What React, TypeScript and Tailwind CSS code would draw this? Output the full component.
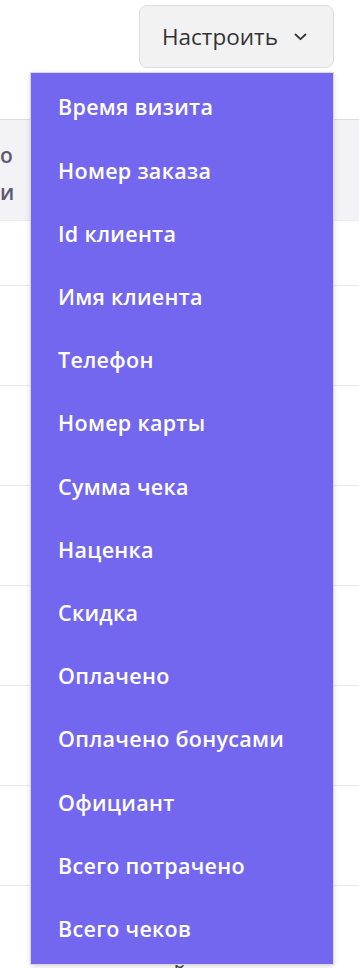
import React from "react";

const items = [
  "Время визита",
  "Номер заказа",
  "Id клиента",
  "Имя клиента",
  "Телефон",
  "Номер карты",
  "Сумма чека",
  "Наценка",
  "Скидка",
  "Оплачено",
  "Оплачено бонусами",
  "Официант",
  "Всего потрачено",
  "Всего чеков",
];

export default function App() {
  const font = { fontFamily: '"Open Sans", "Noto Sans", sans-serif' };
  return (
    <div className="relative w-[359px] h-[968px] overflow-hidden bg-white" style={font}>
      <div className="flex justify-end pr-[25px] pt-[5px] h-[119px]">
        <button className="h-[63px] w-[195px] flex items-center pl-[22px] gap-[16px] rounded-[8px] border border-[#dddddd] bg-[#f2f2f2] text-[#333333] text-[22.5px]">
          <span>Настроить</span>
          <svg width="13" height="8" viewBox="0 0 13 8" fill="none">
            <path d="M1.5 1.5 L6.5 6.2 L11.5 1.5" stroke="#333" strokeWidth="1.8" strokeLinecap="round" strokeLinejoin="round" />
          </svg>
        </button>
      </div>
      <div className="border-t border-[#dcdcdc]">
        <div className="h-[100px] bg-[#f3f2f7] flex flex-col justify-center pt-[8px] text-[#5e5873] text-[21px] font-semibold leading-[37px]">
          <span>о</span>
          <span>и</span>
        </div>
        <div className="h-[65px] border-t border-[#ebe9f1]" />
        {[0, 1, 2, 3, 4, 5].map((i) => (
          <div key={i} className="h-[100px] border-t border-[#ebe9f1]" />
        ))}
        <div className="h-[100px] border-t border-[#ebe9f1] pl-[174px] pt-[62px] text-[18px] text-[#444]">
          р
        </div>
      </div>
      <div className="absolute left-[31px] top-[73px] w-[302px] bg-[#7367f0] py-[3px] shadow-[0_2px_6px_rgba(0,0,0,0.18)] ring-1 ring-[#d8d8d8]">
        {items.map((t) => (
          <div key={t} className="h-[63.2px] flex items-center pl-[27px] text-white text-[21.5px] font-semibold tracking-[0.3px]">
            {t}
          </div>
        ))}
      </div>
    </div>
  );
}
